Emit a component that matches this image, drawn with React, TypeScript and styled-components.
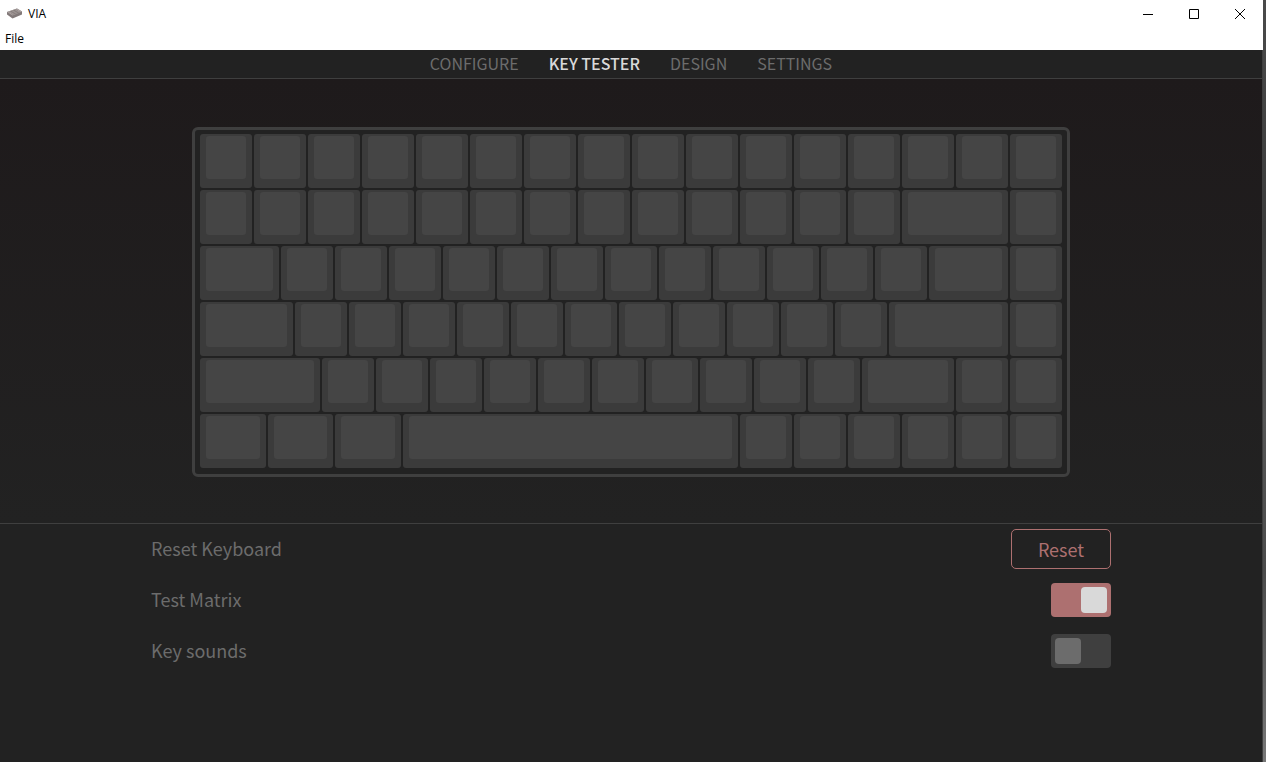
import React from "react";
import styled, { createGlobalStyle } from "styled-components";

const appFont = '"Noto Sans CJK SC", "Source Sans Pro", "Open Sans", sans-serif';
const systemFont = '"Open Sans", "Noto Sans", sans-serif';

const GlobalStyle = createGlobalStyle`
  * { box-sizing: border-box; }
  body { margin: 0; background: #222; }
`;

const Desktop = styled.div`
  display: flex;
  min-height: 100vh;
  padding-right: 3px;
  background: linear-gradient(180deg, #4a4a4a, #3c3c3c 30%, #565656 55%, #4c4c4c 75%, #787878);
`;

const Window = styled.div`
  flex: 1;
  display: flex;
  flex-direction: column;
`;

const Body = styled.div`
  flex: 1;
  background: #222;
  border-right: 1px solid #3f3f3f;
`;

const TitleBar = styled.header`
  display: flex;
  align-items: center;
  height: 28px;
  padding-left: 6px;
  gap: 5px;
  background: #fff;
  color: #000;
  font: 12px/28px ${systemFont};
`;

const WindowTitle = styled.span`
  flex: 1;
`;

const WindowControls = styled.div`
  display: flex;
`;

const WindowButton = styled.button`
  display: grid;
  place-items: center;
  width: 46px;
  height: 28px;
  padding: 0;
  border: 0;
  background: none;
`;

const MenuBar = styled.div`
  display: flex;
  align-items: center;
  height: 22px;
  padding-left: 5px;
  background: #fff;
`;

const MenuItem = styled.button`
  padding: 0;
  border: 0;
  background: none;
  color: #000;
  font: 12px/22px ${systemFont};
`;

const Tabs = styled.nav`
  display: flex;
  justify-content: center;
  gap: 30px;
  height: 29px;
  border-bottom: 1px solid #3f3f3f;
`;

const Tab = styled.a<{ $active?: boolean }>`
  color: ${(p) => (p.$active ? "#d9d9d9" : "#6c6c6c")};
  font: ${(p) => (p.$active ? 500 : 400)} 16px/26px ${appFont};
  text-decoration: none;
`;

const Stage = styled.main`
  display: flex;
  justify-content: center;
  padding: 48px 16px 46px;
  background: linear-gradient(180deg, #1e1a1b, #222);
  border-bottom: 1px solid #3f3f3f;
`;

const Case = styled.div`
  width: 878px;
  padding: 3px 4px 5px;
  background: #222;
  border: 3px solid #3f3f3f;
  border-radius: 6px;
`;

/* Each row is 16 units wide, with four grid columns to a unit. */
const KeyRow = styled.div`
  display: grid;
  grid-template-columns: repeat(64, 1fr);
`;

const KeySlot = styled.div<{ $units: number }>`
  grid-column: span ${(p) => p.$units * 4};
  height: 56px;
  padding: 1px;
`;

const KeyBase = styled.div`
  height: 100%;
  padding: 2px 6px 9px;
  background: #3b3b3b;
  border-radius: 3px;
`;

const KeyCap = styled.div`
  height: 100%;
  background: #454545;
  border-radius: 3px;
`;

const Settings = styled.section`
  max-width: 960px;
  margin: 0 auto;
`;

const SettingRow = styled.div`
  display: flex;
  align-items: center;
  justify-content: space-between;
  height: 51px;
  padding-bottom: 1px;
`;

const SettingLabel = styled.label`
  padding-bottom: 2px;
  color: #6c6c6c;
  font: 18px/24px ${appFont};
`;

const ResetButton = styled.button`
  width: 100px;
  height: 40px;
  padding: 0;
  background: none;
  border: 1px solid #ad7070;
  border-radius: 5px;
  color: #ad7070;
  font: 18px/38px ${appFont};
`;

const Toggle = styled.input`
  appearance: none;
  display: flex;
  width: 60px;
  height: 34px;
  margin: 0;
  padding: 4px;
  border-radius: 4px;
  background: #3f3f3f;

  &::before {
    content: "";
    width: 26px;
    height: 26px;
    border-radius: 4px;
    background: #6c6c6c;
  }

  &:checked {
    justify-content: flex-end;
    background: #ad7070;
  }

  &:checked::before {
    background: #d9d9d9;
  }
`;

const keyRows: number[][] = [
  Array(16).fill(1),
  [...Array(13).fill(1), 2, 1],
  [1.5, ...Array(12).fill(1), 1.5, 1],
  [1.75, ...Array(11).fill(1), 2.25, 1],
  [2.25, ...Array(10).fill(1), 1.75, 1, 1],
  [1.25, 1.25, 1.25, 6.25, ...Array(6).fill(1)],
];

const AppIcon = () => (
  <svg width="17" height="14" viewBox="0 0 17 14" aria-hidden="true">
    <path d="M1 5 11 1.500l5 3V7.500L6.500 11.500 1 7.500z" fill="#827979" />
    <path d="M1 5 11 1.500l5 3L6.500 8.500z" fill="#aaa1a0" />
    <path d="M3.500 5.100 10.500 2.800M5 6.200l7-2.400M6.500 7.300l7-2.500" stroke="#756d6c" strokeWidth=".7" />
  </svg>
);

export default function App() {
  return (
    <>
      <GlobalStyle />
      <Desktop>
        <Window>
          <TitleBar>
            <AppIcon />
            <WindowTitle>VIA</WindowTitle>
            <WindowControls>
              <WindowButton aria-label="Minimize">
                <svg width="10" height="10"><path d="M0 5.500h10" stroke="#000" /></svg>
              </WindowButton>
              <WindowButton aria-label="Maximize">
                <svg width="10" height="10"><path d="M.5.5h9v9h-9z" fill="none" stroke="#000" /></svg>
              </WindowButton>
              <WindowButton aria-label="Close">
                <svg width="10" height="10"><path d="M0 0l10 10M10 0L0 10" stroke="#000" /></svg>
              </WindowButton>
            </WindowControls>
          </TitleBar>
          <MenuBar>
            <MenuItem>File</MenuItem>
          </MenuBar>
          <Body>
            <Tabs>
              <Tab href="#configure">CONFIGURE</Tab>
              <Tab href="#test" $active>KEY TESTER</Tab>
              <Tab href="#design">DESIGN</Tab>
              <Tab href="#settings">SETTINGS</Tab>
            </Tabs>
            <Stage>
              <Case>
                {keyRows.map((row, r) => (
                  <KeyRow key={r}>
                    {row.map((units, k) => (
                      <KeySlot key={k} $units={units}>
                        <KeyBase>
                          <KeyCap />
                        </KeyBase>
                      </KeySlot>
                    ))}
                  </KeyRow>
                ))}
              </Case>
            </Stage>
            <Settings>
              <SettingRow>
                <SettingLabel htmlFor="reset">Reset Keyboard</SettingLabel>
                <ResetButton id="reset">Reset</ResetButton>
              </SettingRow>
              <SettingRow>
                <SettingLabel htmlFor="matrix">Test Matrix</SettingLabel>
                <Toggle id="matrix" type="checkbox" defaultChecked />
              </SettingRow>
              <SettingRow>
                <SettingLabel htmlFor="sounds">Key sounds</SettingLabel>
                <Toggle id="sounds" type="checkbox" />
              </SettingRow>
            </Settings>
          </Body>
        </Window>
      </Desktop>
    </>
  );
}
